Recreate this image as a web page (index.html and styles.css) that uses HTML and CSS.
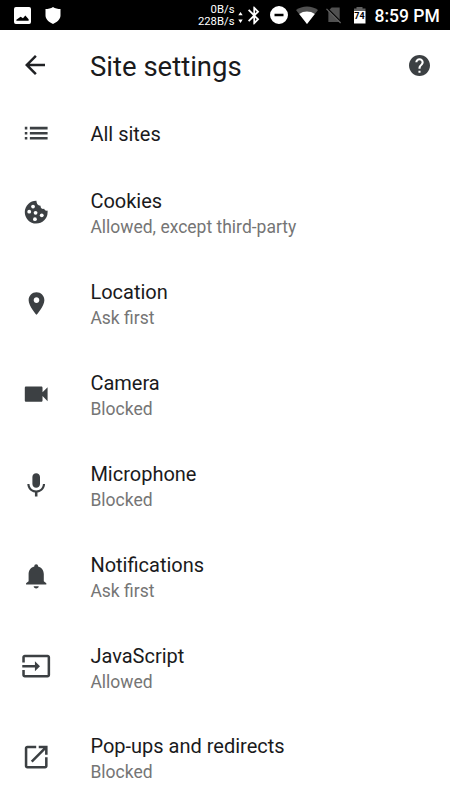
FILE: index.html
```
<!DOCTYPE html>
<html lang="en">
<head>
    <meta charset="UTF-8">
    <meta name="viewport" content="width=device-width, initial-scale=1.0">
    <title>Site settings</title>
    <link rel="stylesheet" href="styles.css">
</head>
<body>
    <!-- Status bar -->
    <div class="status-bar">
        <svg class="status-picture" viewBox="0 0 18 18"><path fill-rule="evenodd" d="M2 0h14a2 2 0 0 1 2 2v14a2 2 0 0 1-2 2H2a2 2 0 0 1-2-2V2a2 2 0 0 1 2-2zM2.500 14.500h13v-1.500L12 9l-2.500 3L7 10.200 2.500 13.500z"/></svg>
        <svg class="status-shield" viewBox="0 0 16 17"><path d="M8 0c2 1.500 5 2 7.500 2v6.500c0 4-4 7-7.500 8.500C4.500 15.500.5 12.500.5 8.500V2C3 2 6 1.500 8 0z"/></svg>
        <div class="net-speed">
            <span>0B/s</span>
            <span>228B/s</span>
        </div>
        <svg class="status-arrows" viewBox="0 0 5 13"><path d="M.3 4.300L2.500 1l2.200 3.300zM.3 8.500h4.400L2.500 12z"/></svg>
        <svg class="status-bluetooth" viewBox="5 2 13.500 20"><path d="M17.710 7.710L12 2h-1v7.590L6.410 5 5 6.410 10.590 12 5 17.590 6.410 19 11 14.410V22h1l5.710-5.710-4.300-4.290 4.300-4.290zM13 5.830l1.880 1.880L13 9.590V5.830zm1.880 10.460L13 18.170v-3.760l1.880 1.880z"/></svg>
        <svg class="status-dnd" viewBox="0 0 18 18"><path fill-rule="evenodd" d="M9 0a9 9 0 1 0 0 18A9 9 0 0 0 9 0zM4.500 7.800h9v2.400h-9z"/></svg>
        <svg class="status-wifi" viewBox="0 0 22 18"><path class="dim" d="M11 18L0 4C6-.8 16-.8 22 4z"/><path d="M11 18L3.200 8c4.500-3.300 11-3.300 15.600 0z"/></svg>
        <svg class="status-sim" viewBox="0 0 18 18"><path class="dim" d="M6 1h8.500v15.500h-12V4.500z"/><path class="slash-gap" d="M1 1.500l16 16"/><path class="slash" d="M.5 2.500l15 15"/></svg>
        <div class="battery"><span>74</span></div>
        <span class="clock">8:59 PM</span>
    </div>

    <!-- Header -->
    <div class="header">
        <svg class="back-icon" viewBox="0 0 24 24"><path d="M20 11H7.830l5.590-5.590L12 4l-8 8 8 8 1.410-1.410L7.830 13H20v-2z"/></svg>
        <h1 class="title">Site settings</h1>
        <svg class="help-icon" viewBox="2 2 20 20"><path d="M12 2C6.480 2 2 6.480 2 12s4.480 10 10 10 10-4.480 10-10S17.520 2 12 2zm1 17h-2v-2h2v2zm2.070-7.750l-.9.920C13.450 12.900 13 13.500 13 15h-2v-.5c0-1.100.45-2.100 1.170-2.830l1.240-1.260c.37-.36.59-.86.59-1.410 0-1.100-.9-2-2-2s-2 .9-2 2H8c0-2.210 1.790-4 4-4s4 1.790 4 4c0 .88-.36 1.680-.93 2.250z"/></svg>
    </div>

    <!-- Settings list -->
    <div class="settings">
        <div class="row single">
            <svg class="icon" viewBox="0 0 24 24"><path d="M3 13h2v-2H3v2zm0 4h2v-2H3v2zm0-8h2V7H3v2zm4 4h14v-2H7v2zm0 4h14v-2H7v2zM7 7v2h14V7H7z"/></svg>
            <div class="text">
                <div class="name">All sites</div>
            </div>
        </div>
        <div class="row">
            <svg class="icon" viewBox="0 0 24 24">
                <path d="M12.200 3a9 9 0 1 0 8.800 9v-1.300c-1.200.5-2.400-.1-2.700-1.400-1.600.5-3.200-.7-2.800-2.400-2 .2-3.300-1.800-3.300-3.900z"/>
                <g class="holes"><circle cx="9.500" cy="7.600" r="1.500"/><circle cx="6.500" cy="11.600" r="1.500"/><circle cx="11.500" cy="12.500" r="1.500"/><circle cx="16.400" cy="14.500" r="1.500"/><circle cx="11" cy="17.500" r="1.500"/></g>
            </svg>
            <div class="text">
                <div class="name">Cookies</div>
                <div class="status">Allowed, except third-party</div>
            </div>
        </div>
        <div class="row">
            <svg class="icon pin" viewBox="0 0 24 24"><path d="M12 2C8.130 2 5 5.130 5 9c0 5.250 7 13 7 13s7-7.750 7-13c0-3.870-3.130-7-7-7zm0 9.500c-1.380 0-2.500-1.120-2.500-2.500s1.120-2.500 2.500-2.500 2.500 1.120 2.500 2.500-1.120 2.500-2.500 2.500z"/></svg>
            <div class="text">
                <div class="name">Location</div>
                <div class="status">Ask first</div>
            </div>
        </div>
        <div class="row">
            <svg class="icon" viewBox="0 0 24 24"><path d="M17 10.500V7c0-.55-.45-1-1-1H4c-.55 0-1 .45-1 1v10c0 .55.45 1 1 1h12c.55 0 1-.45 1-1v-3.500l4 4v-11l-4 4z"/></svg>
            <div class="text">
                <div class="name">Camera</div>
                <div class="status">Blocked</div>
            </div>
        </div>
        <div class="row">
            <svg class="icon" viewBox="0 0 24 24"><path d="M12 14c1.660 0 3-1.340 3-3V5.500c0-1.660-1.340-3-3-3s-3 1.340-3 3V11c0 1.660 1.340 3 3 3zm5.300-3c0 3-2.540 5.100-5.300 5.100S6.700 14 6.700 11H5c0 3.410 2.720 6.230 6 6.720V21h2v-3.280c3.280-.48 6-3.300 6-6.720h-1.700z"/></svg>
            <div class="text">
                <div class="name">Microphone</div>
                <div class="status">Blocked</div>
            </div>
        </div>
        <div class="row">
            <svg class="icon" viewBox="0 0 24 24"><path d="M10 20h4c0 1.100-.9 1.700-2 1.700s-2-.6-2-1.700zM20 17.500v1H4v-1l2-1.500v-5.700c0-3 1.700-5.300 4.500-6V4a1.500 1.500 0 0 1 3 0v.3c2.800.7 4.500 3 4.500 6V16z"/></svg>
            <div class="text">
                <div class="name">Notifications</div>
                <div class="status">Ask first</div>
            </div>
        </div>
        <div class="row">
            <svg class="icon" viewBox="0 0 24 24"><path d="M21 3.010H3c-1.100 0-2 .9-2 2V9h2V4.990h18v14.030H3V15H1v4.010c0 1.100.9 1.980 2 1.980h18c1.100 0 2-.88 2-1.980v-14c0-1.110-.9-2-2-2zM11 16l4-4-4-4v3H1v2h10v3z"/></svg>
            <div class="text">
                <div class="name">JavaScript</div>
                <div class="status">Allowed</div>
            </div>
        </div>
        <div class="row">
            <svg class="icon" viewBox="0 0 24 24"><path d="M19 19H5V5h7V3H5c-1.110 0-2 .9-2 2v14c0 1.100.89 2 2 2h14c1.100 0 2-.9 2-2v-7h-2v7zM14 3v2h3.590l-9.830 9.830 1.410 1.410L19 6.410V10h2V3h-7z"/></svg>
            <div class="text">
                <div class="name">Pop-ups and redirects</div>
                <div class="status">Blocked</div>
            </div>
        </div>
    </div>
</body>
</html>
```
FILE: styles.css
```
body {
    margin: 0;
    height: 800px;
    overflow: hidden;
    background-color: #fff;
    font-family: Roboto, sans-serif;
    color: #1a1a1c;
}

svg {
    display: block;
    flex-shrink: 0;
}

/* Status bar */
.status-bar {
    display: flex;
    align-items: center;
    box-sizing: border-box;
    height: 30px;
    padding-left: 14px;
    background-color: #000;
    color: #fff;
}

.status-bar svg {
    fill: #fff;
}

.status-bar .dim {
    fill: #505050;
}

.status-picture {
    width: 17px;
    height: 17px;
}

.status-shield {
    width: 16px;
    height: 17px;
    margin-left: 13.5px;
}

.net-speed {
    display: flex;
    flex-direction: column;
    width: 54px;
    margin-left: 120px;
    margin-right: 3px;
    padding-top: 1px;
    font-size: 11.3px;
    line-height: 12px;
    text-align: right;
}

.status-arrows {
    width: 5px;
    height: 13px;
    margin-top: 4px;
}

.status-bluetooth {
    width: 12px;
    height: 19px;
    margin-left: 5px;
}

.status-dnd {
    width: 18px;
    height: 18px;
    margin-left: 10px;
}

.status-wifi {
    width: 22px;
    height: 18px;
    margin-left: 8px;
}

.status-sim {
    width: 17px;
    height: 18px;
    margin-left: 8px;
}

.slash {
    stroke: #606060;
    stroke-width: 1.3;
}

.slash-gap {
    stroke: #000;
    stroke-width: 1.5;
}

.battery {
    width: 12px;
    height: 17px;
    margin-left: 11px;
    background: linear-gradient(#606060 0 4px, #fff 4px);
    clip-path: polygon(25% 0, 75% 0, 75% 2px, 100% 2px, 100% 100%, 0 100%, 0 2px, 25% 2px);
    color: #000;
    font-size: 9px;
    font-weight: 700;
    line-height: 19px;
    text-align: center;
}

.clock {
    margin-left: 9px;
    padding-top: 1px;
    font-size: 17.5px;
    font-weight: 500;
    white-space: nowrap;
}

/* Header */
.header {
    display: flex;
    align-items: center;
    box-sizing: border-box;
    height: 70px;
    padding: 0 20px;
}

.back-icon {
    width: 30px;
    height: 30px;
    fill: #202124;
}

.title {
    flex: 1;
    margin: 0 0 0 40px;
    padding-top: 2px;
    font-size: 27.5px;
    font-weight: 400;
}

.help-icon {
    width: 21px;
    height: 21px;
    fill: #3c4043;
}

/* Settings list */
.row {
    display: flex;
    align-items: center;
    height: 90.83px;
}

.row.single {
    height: 67px;
}

.icon {
    width: 30.4px;
    height: 30.4px;
    margin: 0 39px 0 21px;
    fill: #3c4043;
}

.icon.pin {
    width: 27px;
    height: 27px;
    margin: 0 40.7px 0 22.7px;
}

.holes {
    fill: #fff;
}

.text {
    padding-top: 3px;
}

.single .text {
    padding-top: 1.5px;
}

.name {
    font-size: 20px;
    line-height: 27px;
}

.status {
    color: #757575;
    font-size: 17.5px;
    line-height: 24px;
}
```
